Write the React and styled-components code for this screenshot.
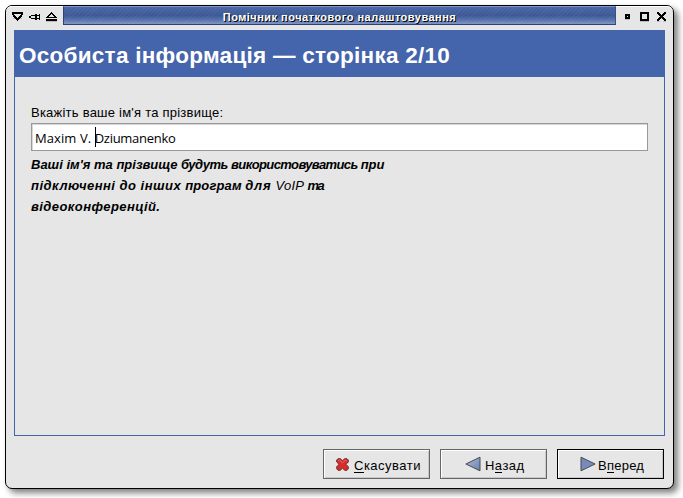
import React from "react";
import styled, { createGlobalStyle } from "styled-components";

const GlobalStyle = createGlobalStyle`
  * { box-sizing: border-box; }
  html, body { margin: 0; background: #fff; overflow: hidden; }
  body { font-family: "Liberation Sans", Arial, sans-serif; font-size: 13px; color: #000; }
`;

const Desktop = styled.main`
  width: 683px;
  height: 498px;
  padding: 5px;
  overflow: hidden;
`;

const Window = styled.section`
  width: 669px;
  height: 484px;
  display: flex;
  flex-direction: column;
  background: #e6e6e6;
  border: 1px solid #000;
  border-radius: 7px;
  box-shadow: 4px 4px 6px rgba(0, 0, 0, 0.5);
`;

const TitleBar = styled.header`
  height: 19px;
  flex: none;
  display: flex;
  border-top: 1px solid #fff;
  border-radius: 6px 6px 0 0;
`;

const Controls = styled.div`
  width: 57px;
  flex: none;
  height: 18px;
`;

const TitleStrip = styled.div`
  flex: 1;
  height: 19px;
  margin-top: -1px;
  display: flex;
  justify-content: center;
  border: 1px solid #2b4374;
  border-top-color: #7f96c8;
  border-right-color: #35508c;
  background:
    repeating-linear-gradient(135deg, rgba(255, 255, 255, 0.04) 0 1px, transparent 1px 3px),
    linear-gradient(#4a66a6 0%, #3d5994 50%, #5570ac 75%, #8095c4 100%);
`;

const TitleText = styled.h1`
  margin: 0;
  font-size: 11px;
  line-height: 20px;
  font-weight: bold;
  letter-spacing: 0.48px;
  white-space: nowrap;
  color: #fff;
  text-shadow: 1px 1px 0 #000;
`;

const Panel = styled.div`
  width: 651px;
  height: 406px;
  margin: 5px 0 0 8px;
  flex: none;
  border: 1px solid #4464ac;
`;

const Banner = styled.h2`
  height: 46px;
  margin: 0;
  padding-left: 4px;
  background: #4464ac;
  color: #fff;
  font-size: 22.5px;
  line-height: 49px;
  letter-spacing: 0.27px;
  white-space: nowrap;
`;

const Form = styled.div`
  padding: 28px 16px 0;
  display: flex;
  flex-direction: column;
`;

const Label = styled.label`
  height: 18px;
  line-height: 16px;
  letter-spacing: 0.23px;
`;

const Entry = styled.div`
  height: 28px;
  display: flex;
  align-items: center;
  padding: 1px 0 0 3px;
  background: #fff;
  border: 1px solid #999;
  box-shadow: inset 1px 1px 0 #d6d6d6;
  font-family: "Open Sans", sans-serif;
  font-size: 13px;
  white-space: pre;
`;

const Caret = styled.span`
  width: 1px;
  height: 20px;
  margin: 0 -1px 2px 0;
  background: #000;
`;

const Hint = styled.p`
  margin: 3px 0 0;
  font-weight: bold;
  font-style: italic;
  line-height: 21px;
`;

const HintLine = styled.span`
  display: block;
  white-space: nowrap;
`;

const Tracked = styled.span`
  letter-spacing: ${(p) => p.$by}px;
`;

const Plain = styled(Tracked)`
  font-weight: normal;
`;

const Actions = styled.footer`
  display: flex;
  justify-content: flex-end;
  gap: 10px;
  padding: 13px 9px 0 0;
`;

const Button = styled.button`
  width: 107px;
  height: 30px;
  padding: 2px 0 0 ${(p) => p.$inset}px;
  display: flex;
  align-items: center;
  gap: ${(p) => p.$gap}px;
  background: #e6e6e6;
  color: #000;
  border: 1px solid ${(p) => (p.$primary ? "#000" : "#666")};
  border-radius: 0;
  box-shadow: inset 1px 1px 0 #fff, inset -1px -1px 0 #c8c8c8;
  font: 13px "Liberation Sans", Arial, sans-serif;
  letter-spacing: ${(p) => p.$spacing}px;
  white-space: nowrap;
`;

const Mnemonic = styled.span`
  box-shadow: inset 0 -1px 0 #000;
`;

const Icon = styled.svg`
  display: block;
  flex: none;
`;

const ButtonIcon = styled(Icon)`
  margin-bottom: 2px;
`;

function LeftControls() {
  return (
    <Icon width="57" height="18" viewBox="6 7 57 18" shapeRendering="crispEdges">
      <path fill="#bdbdbd" d="M13 18h2v1h-2zM20 18h2v1h-2zM46 21h11v1h-11z" />
      <path fillRule="evenodd" d="M12 12h11v3h-1v2h-1v1h-1v1h-1v1h-1v1h-1v-1h-1v-1h-1v-1h-1v-1h-1v-2h-1zM14 14v1h1v1h1v1h1v1h1v-1h1v-1h1v-1h1v-1z" />
      <path d="M29 16h2v-1h4v-1h2v6h-2v-1h-4v-1h-2zM31 16v2h4v-2zM37 15h2v-1h1v6h-1v-1h-2v-1h2v-2h-2z" fillRule="evenodd" />
      <path d="M51 12h1v1h1v1h1v1h1v1h1v1h1v1h-11v-1h1v-1h1v-1h1v-1h1v-1h1zM51 14v1h-1v1h-1v1h5v-1h-1v-1h-1v-1zM46 19h11v2h-11z" fillRule="evenodd" />
    </Icon>
  );
}

function RightControls() {
  return (
    <Icon width="57" height="18" viewBox="616 7 57 18" shapeRendering="crispEdges">
      <path fill="#bdbdbd" d="M625 19h5v1h-5zM640 21h9v1h-9zM657 21h3v1h-3zM663 21h3v1h-3z" />
      <path fillRule="evenodd" d="M625 14h5v5h-5zM627 16v1h1v-1zM640 12h9v9h-9zM642 14v5h5v-5z" />
      <path d="M657 12h2v1h1v1h1v1h1v-1h1v-1h1v-1h2v2h-1v1h-1v1h-1v1h1v1h1v1h1v2h-2v-1h-1v-1h-1v-1h-1v1h-1v1h-1v1h-2v-2h1v-1h1v-1h1v-1h-1v-1h-1v-1h-1z" />
    </Icon>
  );
}

function CancelIcon() {
  return (
    <ButtonIcon width="13" height="13" viewBox="0 0 13 13">
      <path d="M2 .7h2.5l2 2.2 2-2.2H11L12.3 2v2L10 6.3l2.3 2.5v2L11 12.3H8.6L6.5 10l-2.1 2.3H2L.7 10.8v-2L3 6.3.7 4V2z" fill="#d92b2b" stroke="#6e3030" strokeLinejoin="round" />
      <path d="m2 3 1.5-1 3 2.7L9.6 2 11 3" fill="none" stroke="#ee7770" strokeWidth=".8" />
    </ButtonIcon>
  );
}

function ArrowIcon({ back }) {
  return (
    <ButtonIcon width="16" height="16" viewBox="0 0 16 16">
      <defs>
        <linearGradient id={back ? "back" : "next"} x1="0" y1="0" x2="1" y2="1">
          <stop offset="0" stopColor={back ? "#b0bdd8" : "#7488b8"} />
          <stop offset="1" stopColor={back ? "#6b80b0" : "#7c8fbd"} />
        </linearGradient>
      </defs>
      <path
        d={back ? "M15 1.2v13.6L.9 8z" : "M1 1.2v13.6L15.1 8z"}
        fill={back ? "url(#back)" : "url(#next)"}
        stroke="#46494f"
        strokeLinejoin="round"
      />
    </ButtonIcon>
  );
}

export default function App() {
  return (
    <>
      <GlobalStyle />
      <Desktop>
        <Window>
          <TitleBar>
            <Controls><LeftControls /></Controls>
            <TitleStrip>
              <TitleText>Помічник початкового налаштовування</TitleText>
            </TitleStrip>
            <Controls><RightControls /></Controls>
          </TitleBar>
          <Panel>
            <Banner>Особиста інформація — сторінка 2/10</Banner>
            <Form>
              <Label>Вкажіть ваше ім'я та прізвище:</Label>
              <Entry>
                <Tracked $by={0.08}>Maxim V. </Tracked><Caret /><Tracked $by={-0.28}>Dziumanenko</Tracked>
              </Entry>
              <Hint>
                <HintLine>
                  Ваші ім'я та прізвище <Tracked $by={-0.43}>будуть </Tracked>
                  <Tracked $by={-0.6}>використовуватись </Tracked>при
                </HintLine>
                <HintLine>
                  <Tracked $by={0.48}>підключенні до інших </Tracked>
                  <Tracked $by={0.12}>програм </Tracked>
                  <Tracked $by={0.7}>для </Tracked>
                  <Plain $by={0.2}>VoIP </Plain>
                  <Tracked $by={-1.5}>та</Tracked>
                </HintLine>
                <HintLine><Tracked $by={0.4}>відеоконференцій.</Tracked></HintLine>
              </Hint>
            </Form>
          </Panel>
          <Actions>
            <Button $inset={12} $gap={5} $spacing={0.5}>
              <CancelIcon /><span><Mnemonic>С</Mnemonic>касувати</span>
            </Button>
            <Button $inset={24} $gap={4} $spacing={0.45}>
              <ArrowIcon back /><span>Н<Mnemonic>а</Mnemonic>зад</span>
            </Button>
            <Button $inset={22} $gap={2} $spacing={0.25} $primary>
              <ArrowIcon /><span>В<Mnemonic>п</Mnemonic>еред</span>
            </Button>
          </Actions>
        </Window>
      </Desktop>
    </>
  );
}
